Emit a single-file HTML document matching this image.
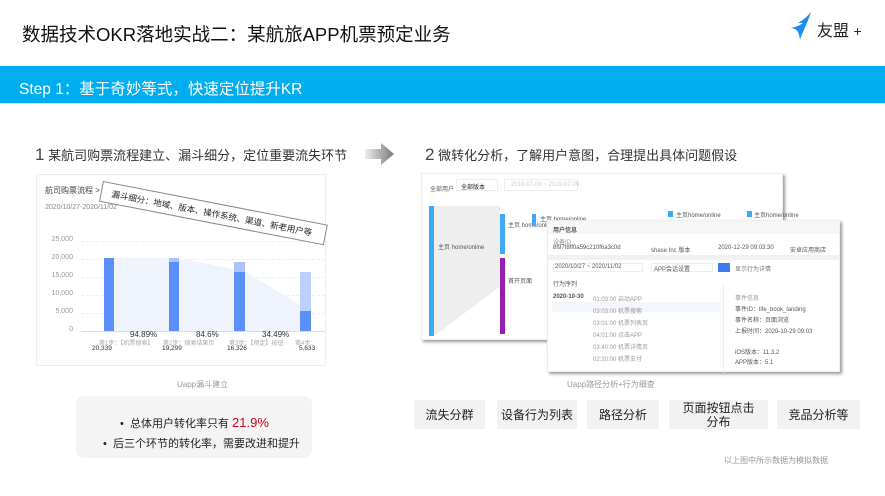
<!DOCTYPE html>
<html><head><meta charset="utf-8">
<style>
*{margin:0;padding:0;box-sizing:border-box}
body{width:885px;height:496px;background:#fff;position:relative;overflow:hidden;font-family:"Liberation Sans","Noto Sans CJK SC",sans-serif;color:#222}
.a{position:absolute;white-space:nowrap}
.bar{position:absolute;left:0;top:66px;width:885px;height:38px;background:#00aef0;border-bottom:1px solid #d8eef8}
.btn{position:absolute;top:400px;height:29px;background:#f2f2f2;font-size:12px;color:#222;display:flex;align-items:center;justify-content:center;text-align:center;line-height:14px}
.ax{position:absolute;font-size:7px;color:#999;right:0}
.grid{position:absolute;left:80px;width:244px;border-top:1px dashed #eee}
.t{font-size:6px;color:#555;position:absolute;white-space:nowrap}
</style></head><body>
<div class="a" style="left:22px;top:21px;font-size:18.5px;color:#111">数据技术OKR落地实战二：某航旅APP机票预定业务</div>
<svg class="a" style="left:789px;top:11px" width="26" height="30" viewBox="0 0 26 30">
<path d="M22 1 C18 6 14 9 9 12 L14 12 C10 15 6 16 2 17 C8 18 10 20 11 29 C13 22 17 16 22 1Z" fill="#1e8cf0"/>
</svg>
<div class="a" style="left:817px;top:17px;font-size:16px;color:#222">友盟 <span style="font-size:14px">+</span></div>

<div class="bar"></div>
<div class="a" style="left:19px;top:77px;font-size:15.5px;color:#fff">Step 1：基于奇妙等式，快速定位提升KR</div>

<div class="a" style="left:35px;top:145px;font-size:13px;color:#333"><span style="font-size:17px;color:#444">1</span> 某航司购票流程建立、漏斗细分，定位重要流失环节</div>
<svg class="a" style="left:365px;top:143px" width="30" height="22"><defs><linearGradient id="g" x1="0" x2="1"><stop offset="0" stop-color="#eee"/><stop offset="1" stop-color="#777"/></linearGradient></defs><path d="M0 6 H16 V0 L29 11 L16 22 V16 H0Z" fill="url(#g)"/></svg>
<div class="a" style="left:425px;top:145px;font-size:13px;color:#333"><span style="font-size:17px;color:#444">2</span> 微转化分析，了解用户意图，合理提出具体问题假设</div>

<!-- left chart -->
<div class="a" style="left:36px;top:174px;width:290px;height:192px;border:1px solid #eee;background:#fff">
<div class="a" style="left:8px;top:10px;font-size:8px;color:#444">航司购票流程 &gt;</div>
<div class="a" style="left:8px;top:29px;font-size:7px;color:#888">2020/10/27-2020/11/02</div>
<div class="grid" style="top:66px;left:44px"></div><div class="grid" style="top:84px;left:44px"></div><div class="grid" style="top:102px;left:44px"></div><div class="grid" style="top:120px;left:44px"></div><div class="grid" style="top:138px;left:44px"></div>
<div class="grid" style="top:156px;left:44px;border-top:1px solid #ddd"></div>
<div class="a" style="left:0;top:61px;width:36px;height:100px">
<div class="ax" style="top:0">25,000</div><div class="ax" style="top:18px">20,000</div><div class="ax" style="top:36px">15,000</div><div class="ax" style="top:54px">10,000</div><div class="ax" style="top:72px">5,000</div><div class="ax" style="top:90px">0</div></div>
<svg class="a" style="left:0;top:0" width="290" height="192"><polygon points="67,83 142,83 207,96 272,135 272,156 67,156" fill="#eef3fc"/>
<rect x="67" y="83" width="10" height="73" fill="#5b8ff9"/>
<rect x="132" y="83" width="10" height="4" fill="#a9c4fb"/><rect x="132" y="87" width="10" height="69" fill="#5b8ff9"/>
<rect x="197" y="87" width="11" height="10" fill="#a9c4fb"/><rect x="197" y="97" width="11" height="59" fill="#5b8ff9"/>
<rect x="263" y="97" width="11" height="39" fill="#bcd1fc"/><rect x="263" y="136" width="11" height="20" fill="#5b8ff9"/></svg>
<div class="a" style="left:93px;top:155px;font-size:8px;color:#333">94.89%</div>
<div class="a" style="left:159px;top:155px;font-size:8px;color:#333">84.6%</div>
<div class="a" style="left:225px;top:155px;font-size:8px;color:#333">34.49%</div>
<div class="t" style="left:62px;top:163px;color:#aaa">第1步：【机票搜索】</div>
<div class="t" style="left:55px;top:170px;font-size:6.5px;color:#333">20,339</div>
<div class="t" style="left:126px;top:163px;color:#aaa">第2步：搜索结果页</div>
<div class="t" style="left:125px;top:170px;font-size:6.5px;color:#333">19,299</div>
<div class="t" style="left:192px;top:163px;color:#aaa">第3步：【预定】按钮</div>
<div class="t" style="left:190px;top:170px;font-size:6.5px;color:#333">16,326</div>
<div class="t" style="left:258px;top:163px;color:#aaa">第4步：</div>
<div class="t" style="left:262px;top:170px;font-size:6.5px;color:#333">5,633</div>
</div>
<div class="a" style="left:103px;top:181px;width:229px;height:21px;border:1px solid #888;background:#fff;transform:rotate(11deg);transform-origin:0 0;font-size:8.5px;color:#222;padding:4px 0 0 10px">漏斗细分：地域、版本、操作系统、渠道、新老用户等</div>

<!-- right images -->
<div class="a" style="left:421px;top:173px;width:362px;height:167px;background:#fff;border:1px solid #eee;box-shadow:2px 2px 3px #999">
<div class="t" style="left:8px;top:10px">全部用户</div><div class="a" style="left:34px;top:5px;width:42px;height:12px;border:1px solid #eee;font-size:6px;padding:2px 4px">全部版本</div>
<div class="a" style="left:82px;top:5px;width:74px;height:12px;border:1px solid #eee;font-size:6px;color:#ccc;padding:2px 6px">2019-07-09 ~ 2019-07-09</div>
<div class="a" style="left:7px;top:32px;width:5px;height:130px;background:#3fa9f5"></div>
<div class="a" style="left:12px;top:32px;width:66px;height:130px;background:#eee;clip-path:polygon(0 0,100% 0,100% 62%,0 100%)"></div>
<div class="t" style="left:16px;top:68px">主页 home/online</div>
<div class="a" style="left:78px;top:40px;width:5px;height:40px;background:#3fa9f5"></div>
<div class="a" style="left:78px;top:84px;width:5px;height:76px;background:#9a1fb0"></div>
<div class="t" style="left:86px;top:46px">主页 home/online</div><div class="t" style="left:86px;top:102px">首开页面</div>
<div class="a" style="left:110px;top:40px;width:4px;height:12px;background:#3fa9f5"></div><div class="t" style="left:118px;top:40px">主页 home/online</div>
<div class="a" style="left:246px;top:37px;width:5px;height:6px;background:#3fa9f5"></div><div class="t" style="left:254px;top:36px">主页home/online</div>
<div class="a" style="left:325px;top:37px;width:5px;height:6px;background:#3fa9f5"></div><div class="t" style="left:332px;top:36px">主页home/online</div>
</div>
<div class="a" style="left:547px;top:220px;width:293px;height:152px;background:#fff;border:1px solid #eee;box-shadow:2px 2px 3px #999">
<div class="a" style="left:0;top:0;width:100%;height:13px;background:#f5f6f7"></div>
<div class="t" style="left:5px;top:4px;font-weight:bold">用户信息</div>
<div class="t" style="left:5px;top:16px;color:#999">设备ID</div><div class="t" style="left:5px;top:24px">8f97f8ff0a59c210f6a3c0d</div>
<div class="t" style="left:103px;top:24px">shase Inc 版本</div><div class="t" style="left:170px;top:24px">2020-12-29 09:03:30</div><div class="t" style="left:242px;top:24px">安卓应用商店</div>
<div class="a" style="left:0;top:34px;width:100%;height:5px;background:#eef1f5"></div>
<div class="a" style="left:5px;top:42px;width:90px;height:9px;border:1px solid #eee"></div><div class="t" style="left:7px;top:43px">2020/10/27 ~ 2020/11/02</div>
<div class="a" style="left:103px;top:42px;width:62px;height:9px;border:1px solid #eee"></div><div class="t" style="left:106px;top:43px">APP会话设置</div>
<div class="a" style="left:170px;top:42px;width:12px;height:9px;background:#3b7cf5"></div>
<div class="t" style="left:187px;top:43px;color:#777">显示行为详情</div>
<div class="a" style="left:175px;top:62px;width:1px;height:90px;background:#eee"></div>
<div class="t" style="left:5px;top:58px">行为序列</div>
<div class="t" style="left:5px;top:73px;font-weight:bold">2020-10-30</div>
<div class="a" style="left:4px;top:81px;width:168px;height:10px;background:#f3f6fb"></div>
<div class="t" style="left:45px;top:73px;color:#999">01:03:00  启动APP</div>
<div class="t" style="left:45px;top:85px;color:#999">03:03:00  机票搜索</div>
<div class="t" style="left:45px;top:97px;color:#999">03:01:00  机票列表页</div>
<div class="t" style="left:45px;top:109px;color:#999">04:01:00  点击APP</div>
<div class="t" style="left:45px;top:121px;color:#999">03:40:00  机票详情页</div>
<div class="t" style="left:45px;top:133px;color:#999">02:20:00  机票支付</div>
<div class="t" style="left:187px;top:72px;color:#999">事件信息</div>
<div class="t" style="left:187px;top:83px">事件ID：life_book_landing</div>
<div class="t" style="left:187px;top:94px">事件名称：页面浏览</div>
<div class="t" style="left:187px;top:105px">上报时间：2020-10-29 09:03</div>
<div class="t" style="left:187px;top:126px">iOS版本：11.3.2</div>
<div class="t" style="left:187px;top:136px">APP版本：5.1</div>
</div>

<div class="a" style="left:177px;top:379px;font-size:8px;color:#999">Uapp漏斗建立</div>
<div class="a" style="left:567px;top:379px;font-size:8px;color:#999">Uapp路径分析+行为细查</div>
<div class="a" style="left:76px;top:396px;width:236px;height:62px;background:#f4f4f4;border-radius:8px"></div>
<div class="a" style="left:120px;top:415px;font-size:11px;color:#222">•&nbsp; 总体用户转化率只有 <span style="color:#d0021b;font-size:13px">21.9%</span></div>
<div class="a" style="left:103px;top:435px;font-size:11px;color:#222">•&nbsp; 后三个环节的转化率，需要改进和提升</div>

<div class="btn" style="left:414px;width:71px">流失分群</div>
<div class="btn" style="left:497px;width:80px">设备行为列表</div>
<div class="btn" style="left:587px;width:72px">路径分析</div>
<div class="btn" style="left:669px;width:99px">页面按钮点击<br>分布</div>
<div class="btn" style="left:777px;width:83px">竞品分析等</div>
<div class="a" style="left:724px;top:455px;font-size:8px;color:#999">以上图中所示数据为模拟数据</div>
</body></html>
